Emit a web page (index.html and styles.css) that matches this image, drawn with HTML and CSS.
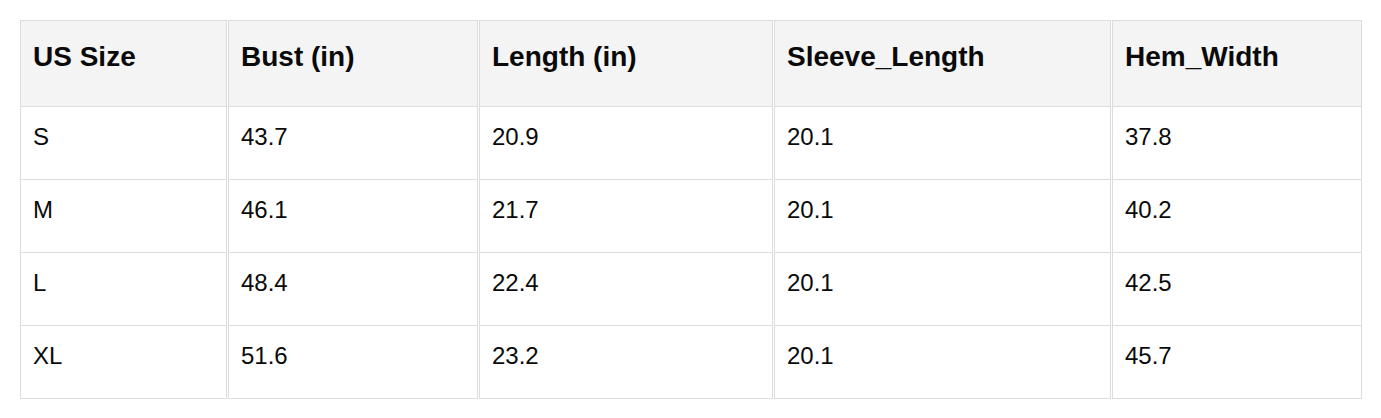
FILE: index.html
```html
<!DOCTYPE html>
<html lang="en">
<head>
<meta charset="utf-8">
<title>Size Chart</title>
<link rel="stylesheet" href="styles.css">
</head>
<body>
<div class="wrap">
<table class="size-table">
  <thead>
    <tr>
      <th class="c1">US Size</th>
      <th class="c2">Bust (in)</th>
      <th class="c3">Length (in)</th>
      <th class="c4">Sleeve_Length</th>
      <th class="c5">Hem_Width</th>
    </tr>
  </thead>
  <tbody>
    <tr><td>S</td><td>43.7</td><td>20.9</td><td>20.1</td><td>37.8</td></tr>
    <tr><td>M</td><td>46.1</td><td>21.7</td><td>20.1</td><td>40.2</td></tr>
    <tr><td>L</td><td>48.4</td><td>22.4</td><td>20.1</td><td>42.5</td></tr>
    <tr><td>XL</td><td>51.6</td><td>23.2</td><td>20.1</td><td>45.7</td></tr>
  </tbody>
</table>
</div>
</body>
</html>
```
FILE: styles.css
```css
html, body {
  margin: 0;
  padding: 0;
  background: #ffffff;
}
.wrap {
  padding: 20px 19px;
}
.size-table {
  table-layout: fixed;
  width: 1344px;
  border-collapse: separate;
  border-spacing: 1px 0;
  font-family: "Liberation Sans", Arial, sans-serif;
  color: #0a0a0a;
}
.size-table th,
.size-table td {
  box-sizing: border-box;
  text-align: left;
  border: 1px solid #dcdcdc;
  padding-left: 12px;
  padding-right: 12px;
}
.size-table th {
  background: #f4f4f4;
  font-weight: bold;
  font-size: 28px;
  line-height: 32px;
  height: 87px;
  padding-top: 20px;
  padding-bottom: 33px;
  vertical-align: top;
}
.size-table td {
  border-top: 0;
  font-size: 24px;
  line-height: 28px;
  height: 73px;
  padding-top: 16px;
  padding-bottom: 28px;
  vertical-align: top;
}
.c1 { width: 207px; }
.c2 { width: 250px; }
.c3 { width: 294px; }
.c4 { width: 337px; }
.c5 { width: 250px; }
```
